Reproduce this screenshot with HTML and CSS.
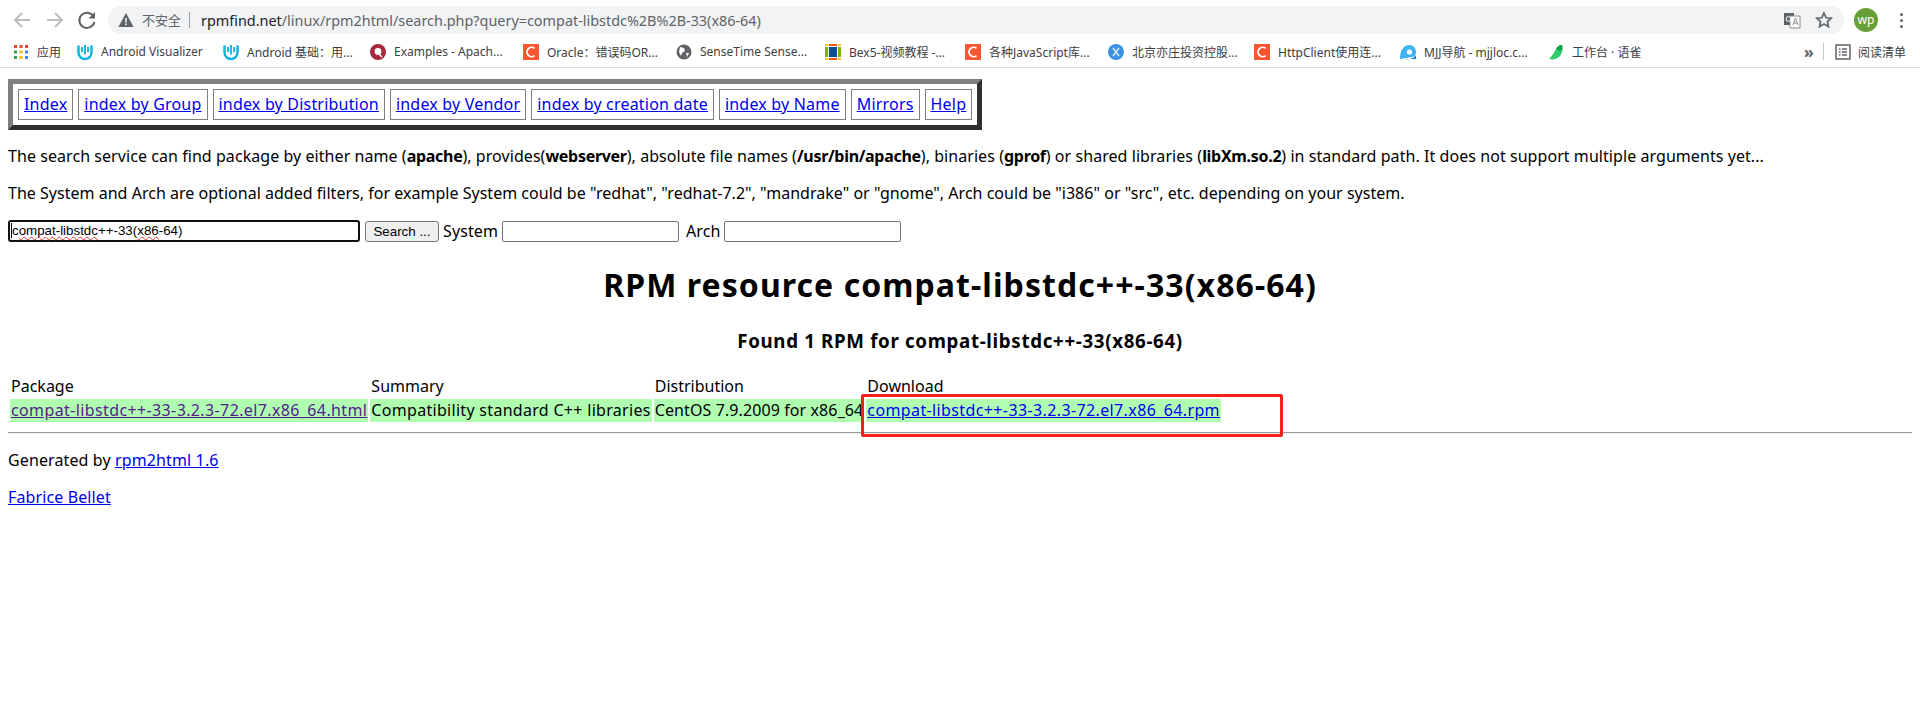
FILE: index.html
```html
<!DOCTYPE html>
<html>
<head>
    <title>RPM resource compat-libstdc++-33(x86-64)</title>
    <link rel="stylesheet" href="styles.css">
</head>
<body>
    <div class="browser">
        <div class="toolbar">
            <svg class="tool-icon back" width="24" height="24" viewBox="0 0 24 24"><path d="M20 12H5M12 5l-7 7 7 7" fill="none" stroke="#bcbdbe" stroke-width="2"/></svg>
            <svg class="tool-icon forward" width="24" height="24" viewBox="0 0 24 24"><path d="M4 12h15M12 5l7 7-7 7" fill="none" stroke="#bcbdbe" stroke-width="2"/></svg>
            <svg class="tool-icon reload" width="24" height="24" viewBox="0 0 24 24"><path d="M18.4 8.2A7.6 7.6 0 1 0 19.4 14" fill="none" stroke="#5f6368" stroke-width="2"/><path d="M20 4v6.5h-6.5z" fill="#5f6368"/></svg>
            <div class="omnibox">
                <svg class="warn" width="16" height="16" viewBox="0 0 16 16"><path d="M8 1l7.6 14H.4z" fill="#5f6368"/><path d="M7.2 6h1.6v4.6H7.2zM7.2 11.6h1.6v1.6H7.2z" fill="#f1f3f4"/></svg>
                <span class="not-secure">不安全</span>
                <span class="url"><b>rpmfind.net</b>/linux/rpm2html/search.php?query=compat-libstdc%2B%2B-33(x86-64)</span>
                <svg class="translate" width="18" height="18" viewBox="0 0 18 18"><rect x="1" y="2" width="10" height="12" fill="#5f6368"/><path d="M7 5h10v12H7z" fill="#fff" stroke="#8a8d91"/><path d="M10 14l2.500-7 2.500 7M11 12h3" fill="none" stroke="#8a8d91"/><circle cx="5.500" cy="8" r="2.400" fill="none" stroke="#fff"/></svg>
                <svg class="star" width="18" height="18" viewBox="0 0 18 18"><path d="M9 2l2.100 4.700 5.100.5-3.800 3.400 1.100 5L9 13l-4.500 2.600 1.100-5-3.800-3.400 5.100-.5z" fill="none" stroke="#5f6368" stroke-width="1.600"/></svg>
            </div>
            <div class="avatar">wp</div>
            <div class="menu-dots"><i></i><i></i><i></i></div>
        </div>
        <div class="bookmarks">
            <div class="mark apps">
                <svg width="14" height="14" viewBox="0 0 14 14"><path d="M0 0h3v3H0z" fill="#ea4335"/><path d="M5.500 0h3v3h-3z" fill="#ea4335"/><path d="M11 0h3v3h-3z" fill="#ea4335"/><path d="M0 5.500h3v3H0z" fill="#34a853"/><path d="M5.500 5.500h3v3h-3z" fill="#fbbc05"/><path d="M11 5.500h3v3h-3z" fill="#4285f4"/><path d="M0 11h3v3H0z" fill="#34a853"/><path d="M5.500 11h3v3h-3z" fill="#fbbc05"/><path d="M11 11h3v3h-3z" fill="#4285f4"/></svg>
                <span>应用</span>
            </div>
            <div class="mark m-android1">
                <svg width="16" height="16" viewBox="0 0 16 16"><path d="M1.500 1.500v7a6.500 6.500 0 0 0 13 0v-7" fill="none" stroke="#02b3e4" stroke-width="2.400"/><path d="M8 1v9.500M5 3v5M11 3v5" stroke="#02b3e4" stroke-width="1.800"/></svg>
                <span>Android Visualizer</span>
            </div>
            <div class="mark m-android2">
                <svg width="16" height="16" viewBox="0 0 16 16"><path d="M1.500 1.500v7a6.500 6.500 0 0 0 13 0v-7" fill="none" stroke="#02b3e4" stroke-width="2.400"/><path d="M8 1v9.500M5 3v5M11 3v5" stroke="#02b3e4" stroke-width="1.800"/></svg>
                <span>Android 基础：用...</span>
            </div>
            <div class="mark m-examples">
                <svg width="16" height="16" viewBox="0 0 16 16"><circle cx="8" cy="8" r="8" fill="#a9283f"/><circle cx="8" cy="7.500" r="3.400" fill="#fff"/><path d="M9 10l3 3" stroke="#fff" stroke-width="1.500"/></svg>
                <span>Examples - Apach...</span>
            </div>
            <div class="mark m-oracle">
                <svg width="16" height="16" viewBox="0 0 16 16"><rect width="16" height="16" fill="#fc5531"/><path d="M11.500 4.400A4.600 4.600 0 1 0 11.500 11.600" fill="none" stroke="#fff" stroke-width="1.800"/></svg>
                <span>Oracle：错误码OR...</span>
            </div>
            <div class="mark m-sense">
                <svg width="16" height="16" viewBox="0 0 16 16"><circle cx="8" cy="8" r="7.500" fill="#5f6368"/><path d="M4 3l4 1 1 3-3 2-1 3-2-4zM10 9l3 0-2 4z" fill="#fff"/></svg>
                <span>SenseTime Sense...</span>
            </div>
            <div class="mark m-bex">
                <svg width="16" height="16" viewBox="0 0 16 16"><rect width="16" height="16" fill="#fff"/><path d="M0 0h3v2H0zM13 0h3v2h-3zM0 14h3v2H0zM13 14h3v2h-3z" fill="#ffc800"/><path d="M4 0h8v2H4zM4 14h8v2H4z" fill="#e8590c"/><path d="M0 3h3v10H0zM13 3h3v10h-3z" fill="#7cb305"/><rect x="4" y="3" width="8" height="10" fill="#0b4ea2"/></svg>
                <span>Bex5-视频教程 -...</span>
            </div>
            <div class="mark m-js">
                <svg width="16" height="16" viewBox="0 0 16 16"><rect width="16" height="16" fill="#fc5531"/><path d="M11.500 4.400A4.600 4.600 0 1 0 11.500 11.600" fill="none" stroke="#fff" stroke-width="1.800"/></svg>
                <span>各种JavaScript库...</span>
            </div>
            <div class="mark m-beijing">
                <svg width="16" height="16" viewBox="0 0 16 16"><circle cx="8" cy="8" r="8" fill="#3d8fe0"/><path d="M5 4l6 8M11 4l-6 8" stroke="#d8ecfb" stroke-width="1.600"/></svg>
                <span>北京亦庄投资控股...</span>
            </div>
            <div class="mark m-http">
                <svg width="16" height="16" viewBox="0 0 16 16"><rect width="16" height="16" fill="#fc5531"/><path d="M11.500 4.400A4.600 4.600 0 1 0 11.500 11.600" fill="none" stroke="#fff" stroke-width="1.800"/></svg>
                <span>HttpClient使用连...</span>
            </div>
            <div class="mark m-mjj">
                <svg width="16" height="16" viewBox="0 0 16 16"><path d="M0 15C0 6 4 1 9 1c4 0 7 3 7 7 0 3-2 5-4.500 5" fill="#3fb4f5"/><circle cx="9.500" cy="8" r="2.600" fill="#fff"/><path d="M4 15c5 1 9 0 12-4v4z" fill="#1b7fe0"/></svg>
                <span>MJJ导航 - mjjloc.c...</span>
            </div>
            <div class="mark m-yuque">
                <svg width="16" height="16" viewBox="0 0 16 16"><path d="M1 15C4 12 6 9 8 5c1-2 3-4 6-4 1 3 1 7-2 11-3 3-7 4-11 3z" fill="#31cc6d"/><path d="M8 5c1-2 3-4 6-4 1 3 0 5-2 6z" fill="#1a9a4c"/></svg>
                <span>工作台 · 语雀</span>
            </div>
            <div class="more">»</div>
            <div class="sep"></div>
            <div class="mark reading">
                <svg width="16" height="16" viewBox="0 0 16 16"><rect x="1" y="1" width="14" height="14" fill="none" stroke="#5f6368" stroke-width="1.500"/><path d="M4 5h1.500M7 5h5M4 8h1.500M7 8h5M4 11h1.500M7 11h5" stroke="#5f6368" stroke-width="1.300"/></svg>
                <span>阅读清单</span>
            </div>
        </div>
    </div>

    <div class="page">
        <div class="nav-box">
            <a href="#">Index</a>
            <a href="#">index by Group</a>
            <a href="#">index by Distribution</a>
            <a href="#">index by Vendor</a>
            <a href="#">index by creation date</a>
            <a href="#">index by Name</a>
            <a href="#">Mirrors</a>
            <a href="#">Help</a>
        </div>

        <p class="intro">The search service can find package by either name (<b>apache</b>), provides(<b>webserver</b>), absolute file names (<b>/usr/bin/apache</b>), binaries (<b>gprof</b>) or shared libraries (<b>libXm.so.2</b>) in standard path. It does not support multiple arguments yet...</p>
        <p class="filters">The System and Arch are optional added filters, for example System could be "redhat", "redhat-7.2", "mandrake" or "gnome", Arch could be "i386" or "src", etc. depending on your system.</p>

        <form class="search-form">
            <div class="query-input"><span class="caret"></span><span>c<u>ompat-libstdc</u>++-33(<u>x86</u>-64)</span></div>
            <button type="button">Search ...</button>
            <span>System</span>
            <input type="text">
            <span class="arch">Arch</span>
            <input type="text">
        </form>

        <h1>RPM resource compat-libstdc++-33(x86-64)</h1>
        <h3>Found 1 RPM for compat-libstdc++-33(x86-64)</h3>

        <table class="results">
            <tr>
                <td>Package</td>
                <td>Summary</td>
                <td>Distribution</td>
                <td>Download</td>
            </tr>
            <tr class="hit">
                <td><a class="visited" href="#">compat-libstdc++-33-3.2.3-72.el7.x86_64.html</a></td>
                <td>Compatibility standard C++ libraries</td>
                <td class="distro">CentOS 7.9.2009 for x86_64</td>
                <td><a href="#">compat-libstdc++-33-3.2.3-72.el7.x86_64.rpm</a></td>
            </tr>
        </table>
        <hr>
        <p class="credit">Generated by <a href="#">rpm2html 1.6</a></p>
        <p class="credit"><a href="#">Fabrice Bellet</a></p>
    </div>

    <div class="red-box"></div>
</body>
</html>
```

FILE: styles.css
```css
* {
    box-sizing: border-box;
}

body {
    margin: 0;
    background-color: #ffffff;
    font-family: "Noto Sans", "Noto Sans CJK SC", sans-serif;
    font-size: 16px;
    color: #000000;
}

a {
    color: #0000ee;
}

a.visited {
    color: #551a8b;
}

/* browser chrome */
.browser {
    height: 68px;
    border-bottom: 1px solid #dadce0;
}

.toolbar {
    height: 36px;
    padding-top: 4px;
    display: flex;
    align-items: center;
}

.tool-icon {
    flex: none;
}

.back {
    margin-left: 10px;
}

.forward {
    margin-left: 9px;
}

.reload {
    margin-left: 8px;
}

.omnibox {
    flex: 1;
    height: 28px;
    margin-left: 9px;
    border-radius: 14px;
    background-color: #f1f3f4;
    display: flex;
    align-items: center;
    padding-left: 10px;
    padding-right: 8px;
    font-size: 14px;
    color: #5f6368;
}

.not-secure {
    margin-left: 8px;
    padding-right: 8px;
    border-right: 1px solid #9aa0a6;
    font-size: 13px;
    line-height: 16px;
}

.url {
    margin-left: 11px;
    flex: 1;
    font-size: 14.400px;
}

.url b {
    font-weight: normal;
    color: #202124;
}

.translate {
    margin-right: 14px;
}

.star {
    margin-right: 3px;
}

.avatar {
    width: 24px;
    height: 24px;
    margin-left: 10px;
    border-radius: 50%;
    background-color: #689f38;
    color: #ffffff;
    font-size: 12px;
    line-height: 23px;
    text-align: center;
}

.menu-dots {
    width: 3px;
    margin: 0 17px 0 22px;
    display: flex;
    flex-direction: column;
    gap: 3px;
}

.menu-dots i {
    width: 3px;
    height: 3px;
    border-radius: 50%;
    background-color: #5f6368;
}

.bookmarks {
    height: 31px;
    display: flex;
    align-items: center;
    font-size: 12px;
    color: #3c4043;
}

.mark {
    display: flex;
    align-items: center;
    gap: 8px;
    white-space: nowrap;
}

.mark svg {
    flex: none;
}

.apps {
    margin-left: 14px;
    width: 63px;
    gap: 9px;
}

.m-android1 {
    margin-left: 0;
    width: 146px;
}

.m-android2 {
    width: 147px;
}

.m-examples {
    width: 153px;
}

.m-oracle {
    width: 153px;
}

.m-sense {
    width: 149px;
}

.m-bex {
    width: 140px;
}

.m-js {
    width: 143px;
}

.m-beijing {
    width: 146px;
}

.m-http {
    width: 146px;
}

.m-mjj {
    width: 148px;
}

.m-yuque {
    width: 256px;
}

.more {
    width: 19px;
    font-size: 16px;
    font-weight: bold;
    color: #5f6368;
}

.sep {
    width: 1px;
    height: 17px;
    background-color: #c4c7cb;
}

.reading {
    margin-left: 11px;
    gap: 7px;
}

/* page */
.page {
    padding: 11px 8px 0 8px;
}

.nav-box {
    display: inline-flex;
    gap: 5px;
    padding: 5px 5px 5px 5px;
    border: 5px solid;
    border-color: #808080 #2f2f2f #2f2f2f #808080;
    height: 51px;
    line-height: 29px;
    letter-spacing: 0.2px;
}

.nav-box a {
    padding: 0 5px;
    border: 1px solid #808080;
    height: 31px;
}

p {
    margin: 16px 0;
    line-height: 21px;
}

.intro {
    letter-spacing: 0.06px;
}

.intro b {
    letter-spacing: -0.3px;
}

.filters {
    letter-spacing: 0.02px;
}

.credit {
    letter-spacing: 0.12px;
}

.search-form {
    display: flex;
    align-items: center;
    height: 22px;
    gap: 4px;
    letter-spacing: 0.1px;
}

.query-input {
    width: 352px;
    height: 22px;
    border: 2px solid #101010;
    border-radius: 3px;
    font-family: "Liberation Sans", sans-serif;
    font-size: 13.333px;
    letter-spacing: 0;
    line-height: 18px;
    display: flex;
    white-space: nowrap;
}

.query-input u {
    text-decoration: underline wavy #e53935 1px;
}

.caret {
    width: 1px;
    height: 15px;
    margin: 1px 0 0 1px;
    background-color: #000000;
}

.search-form button {
    width: 74px;
    height: 21px;
    padding: 0;
    margin-left: 1px;
    border: 1px solid #767676;
    border-radius: 3px;
    background-color: #efefef;
    font-family: "Liberation Sans", sans-serif;
    font-size: 13.333px;
    letter-spacing: 0;
}

.search-form input {
    width: 177px;
    height: 21px;
    border: 1px solid #767676;
    border-radius: 2px;
}

.arch {
    margin-left: 3px;
}

h1 {
    margin: 23px 0 0 0;
    font-size: 32px;
    line-height: 40px;
    text-align: center;
    letter-spacing: 1.07px;
}

h3 {
    margin: 24px 0 0 0;
    font-size: 18.720px;
    line-height: 24px;
    text-align: center;
    letter-spacing: 0.67px;
}

.results {
    margin-top: 20px;
    border-spacing: 2px;
}

.results td {
    padding: 1px;
    line-height: 20px;
    white-space: nowrap;
}

.hit td {
    background-color: #b0ffb0;
    line-height: 21px;
    letter-spacing: 0.3px;
}

.hit td.distro {
    letter-spacing: 0.1px;
}

.hit a {
    letter-spacing: 0.38px;
}

hr {
    margin: 8px 0 0 0;
    height: 2px;
    border: none;
    border-top: 1px solid #9a9a9a;
    border-bottom: 1px solid #eeeeee;
}

/* annotation drawn over the screenshot */
.red-box {
    position: absolute;
    left: 861px;
    top: 394px;
    width: 422px;
    height: 43px;
    border: 3px solid #f5201a;
    border-radius: 2px;
}
```
